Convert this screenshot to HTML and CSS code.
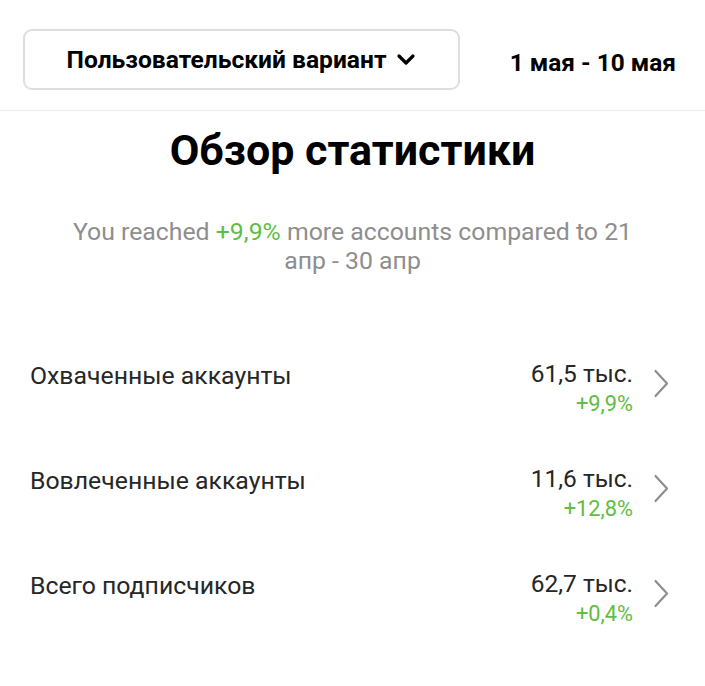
FILE: index.html
```html
<!DOCTYPE html>
<html lang="ru">
<head>
<meta charset="utf-8">
<link rel="stylesheet" href="styles.css">
</head>
<body>
<header class="top">
  <button class="variant">Пользовательский вариант
    <svg class="caret" width="20" height="14" viewBox="0 0 20 14"><path d="M3 3 L10 10 L17 3" fill="none" stroke="#000" stroke-width="3.2" stroke-linecap="round" stroke-linejoin="round"/></svg>
  </button>
  <div class="range">1 мая - 10 мая</div>
</header>
<section class="intro">
  <h1 class="title">Обзор статистики</h1>
  <p class="summary">You reached <span class="up">+9,9%</span> more accounts compared to 21 апр - 30 апр</p>
</section>
<ul class="stats">
  <li class="stat">
    <span class="label">Охваченные аккаунты</span>
    <span class="vals"><span class="num">61,5 тыс.</span><span class="up delta">+9,9%</span></span>
    <svg class="chev" width="16" height="29" viewBox="0 0 16 29"><path d="M2.5 2 L14 14.5 L2.5 27" fill="none" stroke="#8e8e8e" stroke-width="2.2" stroke-linecap="round" stroke-linejoin="round"/></svg>
  </li>
  <li class="stat">
    <span class="label">Вовлеченные аккаунты</span>
    <span class="vals"><span class="num">11,6 тыс.</span><span class="up delta">+12,8%</span></span>
    <svg class="chev" width="16" height="29" viewBox="0 0 16 29"><path d="M2.5 2 L14 14.5 L2.5 27" fill="none" stroke="#8e8e8e" stroke-width="2.2" stroke-linecap="round" stroke-linejoin="round"/></svg>
  </li>
  <li class="stat">
    <span class="label">Всего подписчиков</span>
    <span class="vals"><span class="num">62,7 тыс.</span><span class="up delta">+0,4%</span></span>
    <svg class="chev" width="16" height="29" viewBox="0 0 16 29"><path d="M2.5 2 L14 14.5 L2.5 27" fill="none" stroke="#8e8e8e" stroke-width="2.2" stroke-linecap="round" stroke-linejoin="round"/></svg>
  </li>
</ul>
</body>
</html>
```
FILE: styles.css
```css
* { box-sizing: border-box; }
body {
  margin: 0;
  background: #fff;
  font-family: Roboto, "Noto Sans", sans-serif;
  color: #262626;
}
.top {
  height: 111px;
  display: flex;
  align-items: flex-start;
  padding: 29px 29px 0 23px;
  border-bottom: 1px solid #ececec;
}
.variant {
  width: 437px;
  height: 61px;
  border: 2px solid #dedede;
  border-radius: 9px;
  background: #fff;
  font-family: inherit;
  font-weight: 700;
  font-size: 24.6px;
  color: #000;
  display: flex;
  align-items: center;
  justify-content: center;
  gap: 10px;
  padding: 0;
}
.caret { margin-top: 1px; }
.range {
  margin-left: auto;
  margin-top: 19px;
  font-weight: 700;
  font-size: 24.4px;
  line-height: 30px;
  color: #000;
}
.intro {
  text-align: center;
  padding: 0 70px;
}
.title {
  margin: 15px 0 0;
  font-size: 43px;
  line-height: 48px;
  font-weight: 700;
  color: #000;
}
.summary {
  margin: 43px 0 0;
  font-size: 24.8px;
  line-height: 29px;
  color: #8e8e8e;
}
.up { color: #5fbd45; }
.stats {
  list-style: none;
  margin: 85px 0 0;
  padding: 0 36px 0 30px;
}
.stat {
  display: flex;
  align-items: flex-start;
  height: 105px;
}
.label {
  flex: 1;
  font-size: 24.8px;
  line-height: 28px;
  padding-top: 2px;
}
.vals {
  display: flex;
  flex-direction: column;
  align-items: flex-end;
}
.num { font-size: 24.5px; line-height: 28px; }
.delta { font-size: 21.8px; line-height: 31px; }
.chev { margin-left: 20px; margin-top: 9px; }
```
